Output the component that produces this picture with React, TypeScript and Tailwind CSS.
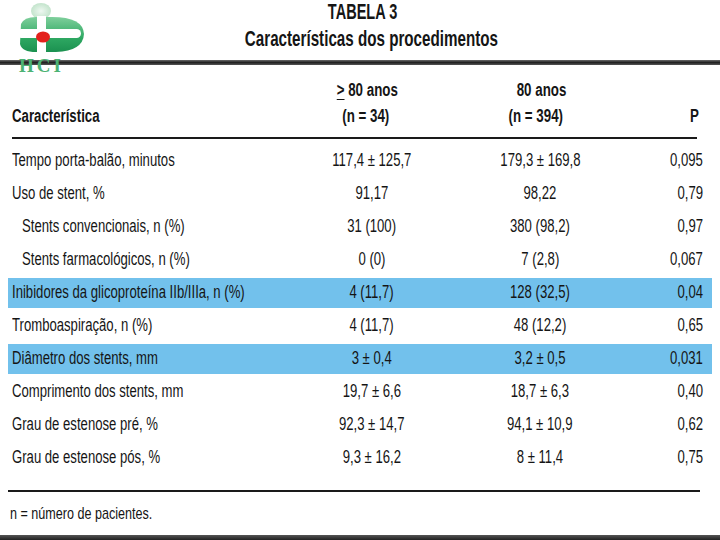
const rows = [
  { label: "Tempo porta-balão, minutos", a: "117,4 ± 125,7", b: "179,3 ± 169,8", p: "0,095" },
  { label: "Uso de stent, %", a: "91,17", b: "98,22", p: "0,79" },
  { label: "Stents convencionais, n (%)", a: "31 (100)", b: "380 (98,2)", p: "0,97", indent: true },
  { label: "Stents farmacológicos, n (%)", a: "0 (0)", b: "7 (2,8)", p: "0,067", indent: true },
  { label: "Inibidores da glicoproteína IIb/IIIa, n (%)", a: "4 (11,7)", b: "128 (32,5)", p: "0,04", hl: true },
  { label: "Tromboaspiração, n (%)", a: "4 (11,7)", b: "48 (12,2)", p: "0,65" },
  { label: "Diâmetro dos stents, mm", a: "3 ± 0,4", b: "3,2 ± 0,5", p: "0,031", hl: true },
  { label: "Comprimento dos stents, mm", a: "19,7 ± 6,6", b: "18,7 ± 6,3", p: "0,40" },
  { label: "Grau de estenose pré, %", a: "92,3 ± 14,7", b: "94,1 ± 10,9", p: "0,62" },
  { label: "Grau de estenose pós, %", a: "9,3 ± 16,2", b: "8 ± 11,4", p: "0,75" },
];

// narrow text: the source uses a condensed face, squeeze Liberation Sans
function N({ children, className = "" }: { children: React.ReactNode; className?: string }) {
  return <span className={"inline-block whitespace-nowrap " + className}>{children}</span>;
}

function Logo() {
  return (
    <svg width="90" height="76" viewBox="0 0 90 76" className="absolute left-0 top-0">
      <defs>
        <radialGradient id="head" cx="50%" cy="50%" r="50%">
          <stop offset="0%" stopColor="#eef8f1" />
          <stop offset="100%" stopColor="#c3e4cc" />
        </radialGradient>
        <linearGradient id="body" x1="0" y1="0" x2="0" y2="1">
          <stop offset="0%" stopColor="#7fcf9c" />
          <stop offset="60%" stopColor="#2ea862" />
          <stop offset="100%" stopColor="#1b9150" />
        </linearGradient>
      </defs>
      <ellipse cx="41" cy="11" rx="10" ry="8" fill="url(#head)" />
      <path d="M21 24 Q24 17 36 17 L52 17 Q83 17 84 34 Q83 51 56 52 L36 52 Q22 52 20 44 Z" fill="url(#body)" />
      <rect x="17" y="29" width="64" height="9" rx="4.5" fill="#ffffff" />
      <rect x="37" y="16" width="9" height="37" fill="#ffffff" />
      <ellipse cx="43" cy="37" rx="7" ry="5.5" fill="#e3211c" />
      <text x="19" y="72" fontFamily="Liberation Serif, serif" fontWeight="bold" fontSize="19" fill="#4cb374" letterSpacing="3">HCI</text>
    </svg>
  );
}

export default function App() {
  return (
    <div
      className="relative w-[720px] h-[540px] bg-white overflow-hidden text-[#151515]"
      style={{ fontFamily: '"Liberation Sans", Arial, sans-serif' }}
    >
      {/* title */}
      <div className="flex flex-col items-center pt-[1px] font-bold text-[22px] leading-[22px]">
        <div className="ml-[6px]"><N className="scale-x-[0.66]">TABELA 3</N></div>
        <div className="mt-[5px] ml-[22px]"><N className="scale-x-[0.69]">Características dos procedimentos</N></div>
      </div>
      <div className="mt-[10px] h-[5px] bg-gradient-to-b from-[#6b6b6b] via-[#222] to-[#555]" />
      <Logo />

      {/* header */}
      <div className="mx-[12px] mt-[15px] font-bold text-[18px] leading-[20px]">
        <div className="grid grid-cols-[294px_120px_50px_120px_1fr]">
          <div />
          <div className="text-center"><N className="scale-x-[0.74] ml-[2px]"><span className="underline underline-offset-[3px]">&gt;</span> 80 anos</N></div>
          <div />
          <div className="text-center"><N className="scale-x-[0.74] ml-[12px]">80 anos</N></div>
          <div />
        </div>
        <div className="grid grid-cols-[294px_120px_50px_120px_1fr] mt-[6px]">
          <div><N className="scale-x-[0.735] origin-left">Característica</N></div>
          <div className="text-center"><N className="scale-x-[0.74]">(n = 34)</N></div>
          <div />
          <div className="text-center"><N className="scale-x-[0.74]">(n = 394)</N></div>
          <div className="text-right pr-[9px]"><N className="scale-x-[0.74] origin-right">P</N></div>
        </div>
      </div>
      <div className="mx-[12px] mt-[11px] w-[685px] h-[2px] bg-[#1a1a1a]" />

      {/* body */}
      <div className="mt-[5px] text-[17.5px]">
        {rows.map((r) => (
          <div key={r.label} className="h-[33px] py-[1.5px] px-[8px]">
            <div
              className={
                "h-full grid grid-cols-[302px_124px_44px_124px_1fr] items-center " +
                (r.hl ? "bg-[#72c1ec]" : "")
              }
            >
              <div className={r.indent ? "pl-[14px]" : "pl-[4px]"}>
                <N className="scale-x-[0.75] origin-left">{r.label}</N>
              </div>
              <div className="text-center"><N className="scale-x-[0.75]">{r.a}</N></div>
              <div />
              <div className="text-center"><N className="scale-x-[0.75]">{r.b}</N></div>
              <div className="text-right pr-[9px]"><N className="scale-x-[0.75] origin-right">{r.p}</N></div>
            </div>
          </div>
        ))}
      </div>

      <div className="ml-[8px] mt-[16px] w-[692px] h-[2px] bg-[#1a1a1a]" />
      <div className="ml-[10px] mt-[12px] text-[17px] leading-[20px]">
        <N className="scale-x-[0.74] origin-left">n = número de pacientes.</N>
      </div>
      <div className="absolute left-0 bottom-0 w-full h-[5px] bg-gradient-to-b from-[#555] to-[#222]" />
    </div>
  );
}
